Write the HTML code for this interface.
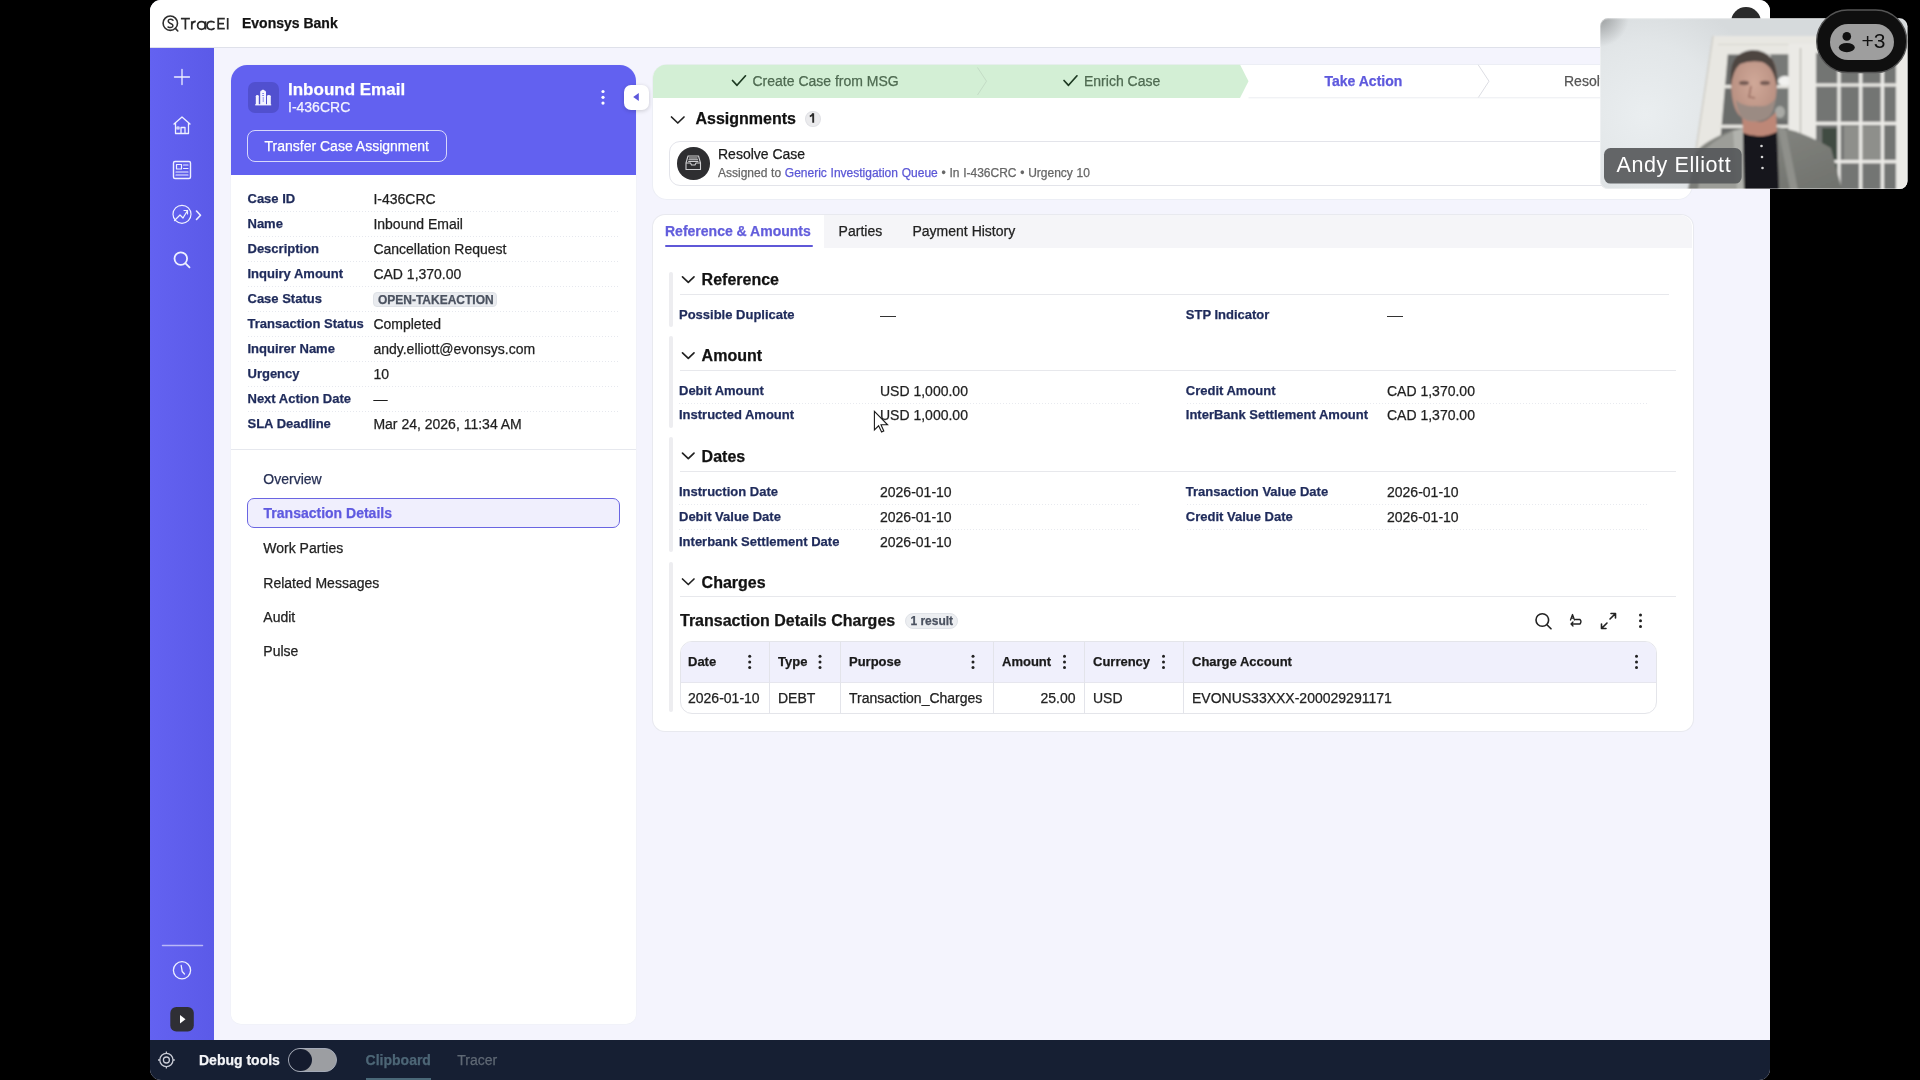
<!DOCTYPE html>
<html><head><meta charset="utf-8">
<style>
*{box-sizing:border-box;margin:0;padding:0}
html,body{width:1920px;height:1080px;overflow:hidden;background:#000;font-family:"Liberation Sans",sans-serif}
#screen{position:absolute;left:150px;top:0;width:1620px;height:1080px;background:#f4f4fd;border-radius:11px;overflow:hidden;will-change:transform}
.a{position:absolute}
.t{position:absolute;white-space:nowrap;line-height:1;-webkit-text-stroke:0.25px currentColor}
svg.a{overflow:visible}
</style></head><body>
<div id="screen">
<div class="a" style="left:0.0px;top:0.0px;width:1620.0px;height:48.0px;background:#fff;border-bottom:1px solid #dfe1ea"></div>
<svg class="a" style="left:0;top:0" width="1620" height="1080" viewBox="150 0 1620 1080">
<g fill="none" stroke="#2e2e2e" stroke-width="1.6" stroke-linecap="round">
<circle cx="170.3" cy="23.2" r="7.2"/>
<path d="M175.4 28.4 L177.8 31"/>
<path d="M173 20.3 Q171.5 18.8 169.6 19.4 Q167.6 20.2 168.5 22 Q169.5 23.3 171.6 24 Q173.6 25 172.5 26.8 Q171 28.2 168 27" stroke-width="1.5"/>
</g>
<g fill="none" stroke="#2a2a2a" stroke-width="1.75" stroke-linecap="butt">
<path d="M180.9 18.6 H189.9 M185.4 18.6 V29.5"/>
<path d="M191.8 21.2 V29.5 M191.8 24.5 Q192.3 21.4 195.8 21.3"/>
<circle cx="201.5" cy="25.4" r="3.9"/><path d="M205.4 21.2 V29.5"/>
<path d="M214.6 22.6 Q213.2 21.3 211.1 21.3 Q207.1 21.5 207 25.4 Q207.1 29.3 211.1 29.5 Q213.2 29.5 214.6 28.2"/>
<path d="M224.8 18.6 H218.2 V28.6 H224.8 M218.2 23.7 H224"/>
<path d="M227.7 18 V29.5"/>
</g>
</svg>
<div class="t" style="left:92.0px;top:16.4px;font-size:14px;font-weight:bold;color:#141414;">Evonsys Bank</div>
<div class="a" style="left:0.0px;top:48.0px;width:64.0px;height:992.0px;background:linear-gradient(90deg,#6362f1,#5b5ae8)"></div>
<svg class="a" style="left:0;top:0" width="1620" height="1080" viewBox="150 0 1620 1080">
<g fill="none" stroke="#eef0ff" stroke-width="1.3" stroke-linecap="round" stroke-linejoin="round">
<path d="M182 69.5 V84.5 M174.5 77 H189.5"/>
<path d="M174 124 L182 117 L190 124 M175.5 123 V133.5 H188.5 V123 M181 133.5 V127.5 H185 V133.5"/>
<rect x="177" y="127" width="2" height="2" stroke-width="1.2"/>
<rect x="173.5" y="161.5" width="17" height="17" rx="1.5" stroke-width="1.4"/>
<rect x="176.5" y="164.5" width="5" height="4.5" stroke-width="1.2"/>
<path d="M183.5 165 H188 M183.5 168.5 H188 M176 172 H188 M176 175 H188" stroke-width="1.2"/>
<circle cx="182" cy="214.3" r="9" stroke-width="1.2"/>
<path d="M174.5 220.5 L180 215 L183 218 L187.5 210.5 M184 210.5 H187.5 V214" stroke-width="1.2"/>
<path d="M196.5 211 L200.5 215.2 L196.5 219.5" stroke-width="1.6"/>
<circle cx="180.8" cy="258.6" r="6.3" stroke-width="1.8"/>
<path d="M185.5 263.3 L189.5 267.3" stroke-width="1.8"/>
<path d="M162.5 945.5 H202.5" stroke="#b9b8f7" stroke-width="1.5"/>
<circle cx="182" cy="970.3" r="8.6" stroke-width="1.3"/>
<path d="M181.2 965.5 L182.2 971.5 L184.5 974" stroke-width="1.3"/>
</g>
<rect x="170.3" y="1007" width="23.5" height="24.5" rx="6" fill="#2f2f35"/>
<path d="M180 1015 L185.5 1019.2 L180 1023.4 Z" fill="#fff"/>
</svg>
<div class="a" style="left:0.0px;top:1040.0px;width:1620.0px;height:40.0px;background:#161f33"></div>
<svg class="a" style="left:6px;top:1050px" width="21" height="21" viewBox="0 0 21 21">
<g fill="none" stroke="#c9ccd6" stroke-width="1.3">
<circle cx="10.4" cy="10" r="6.6"/><circle cx="10.4" cy="10" r="3"/>
<path d="M10.4 1.6 V3.4 M10.4 16.6 V18.4 M2 10 H3.8 M17 10 H18.8"/></g></svg>
<div class="t" style="left:49.0px;top:1052.7px;font-size:14px;font-weight:bold;color:#f4f5f8;">Debug tools</div>
<div class="a" style="left:138.0px;top:1047.8px;width:49.0px;height:24.2px;background:#9c9ea2;border:1.2px solid #a4aab8;border-radius:12px"></div>
<div class="a" style="left:139.2px;top:1049.0px;width:22.6px;height:21.8px;background:#141b2e;border-radius:50%"></div>
<div class="t" style="left:215.6px;top:1052.7px;font-size:14px;font-weight:bold;color:#4d6676;">Clipboard</div>
<div class="a" style="left:215.6px;top:1077.5px;width:65.7px;height:2.5px;background:#4a6878"></div>
<div class="t" style="left:307.3px;top:1052.7px;font-size:14px;font-weight:normal;color:#5f6874;">Tracer</div>
<div class="a" style="left:81.0px;top:65.0px;width:405.0px;height:958.5px;background:#fff;border-radius:16px 16px 10px 10px;box-shadow:0 0 0 0.5px #eef0f6"></div>
<div class="a" style="left:81.0px;top:65.0px;width:405.0px;height:109.5px;background:#6261f0;border-radius:16px 16px 0 0"></div>
<div class="a" style="left:97.5px;top:81.5px;width:31.5px;height:31.5px;background:#5150cf;border-radius:7px"></div>
<svg class="a" style="left:104px;top:88px" width="19" height="19" viewBox="0 0 19 19">
<g fill="#f4f4ff"><path d="M1.8 17 V8.3 Q1.8 7 3.3 7 Q4.8 7 4.8 8.3 V17 Z"/><path d="M6.2 17 V4.2 Q6.2 2.8 7.4 2.6 L9 1.5 L10.6 2.6 Q12 2.8 12 4.2 V17 Z"/><path d="M13 17 V8.3 Q13 7 14.5 7 Q16.8 7 16.8 8.3 V17 Z"/><rect x="1.2" y="16.2" width="16" height="1.2"/></g>
<g fill="#6a6ae8"><rect x="8.2" y="5" width="1.8" height="0.8"/><rect x="8.2" y="7" width="1.8" height="0.8"/><rect x="8.8" y="9" width="0.7" height="5"/></g>
</svg>
<div class="t" style="left:138.0px;top:80.9px;font-size:17px;font-weight:bold;color:#fff;">Inbound Email</div>
<div class="t" style="left:138.0px;top:99.6px;font-size:14px;font-weight:normal;color:#f3f3ff;">I-436CRC</div>
<svg class="a" style="left:449px;top:88px" width="8" height="20" viewBox="0 0 8 20"><g fill="#fff"><circle cx="4" cy="3.5" r="1.6"/><circle cx="4" cy="9.3" r="1.6"/><circle cx="4" cy="15.1" r="1.6"/></g></svg>
<div class="a" style="left:97.0px;top:129.5px;width:200.0px;height:32.5px;border:1px solid rgba(255,255,255,.75);border-radius:8px"></div>
<div class="t" style="left:114.5px;top:139.1px;font-size:14px;font-weight:normal;color:#fff;">Transfer Case Assignment</div>
<div class="a" style="left:474.0px;top:85.0px;width:24.5px;height:24.5px;background:#fff;border-radius:7px;box-shadow:0 1px 4px rgba(0,0,0,.18)"></div>
<svg class="a" style="left:480px;top:91px" width="12" height="12" viewBox="0 0 12 12"><path d="M3.2 6 L8.8 2 V10 Z" fill="#5d58dc"/></svg>
<div class="t" style="left:97.5px;top:192.3px;font-size:13px;font-weight:bold;color:#1f2b5b;">Case ID</div>
<div class="t" style="left:223.4px;top:192.3px;font-size:14px;font-weight:normal;color:#1f1f1f;">I-436CRC</div>
<div class="a" style="left:97.5px;top:210.9px;width:372.5px;height:1.0px;background-image:linear-gradient(90deg,#e6e8ee 50%,transparent 50%);background-size:3px 1px"></div>
<div class="t" style="left:97.5px;top:217.3px;font-size:13px;font-weight:bold;color:#1f2b5b;">Name</div>
<div class="t" style="left:223.4px;top:217.3px;font-size:14px;font-weight:normal;color:#1f1f1f;">Inbound Email</div>
<div class="a" style="left:97.5px;top:235.9px;width:372.5px;height:1.0px;background-image:linear-gradient(90deg,#e6e8ee 50%,transparent 50%);background-size:3px 1px"></div>
<div class="t" style="left:97.5px;top:242.3px;font-size:13px;font-weight:bold;color:#1f2b5b;">Description</div>
<div class="t" style="left:223.4px;top:242.3px;font-size:14px;font-weight:normal;color:#1f1f1f;">Cancellation Request</div>
<div class="a" style="left:97.5px;top:260.9px;width:372.5px;height:1.0px;background-image:linear-gradient(90deg,#e6e8ee 50%,transparent 50%);background-size:3px 1px"></div>
<div class="t" style="left:97.5px;top:267.3px;font-size:13px;font-weight:bold;color:#1f2b5b;">Inquiry Amount</div>
<div class="t" style="left:223.4px;top:267.3px;font-size:14px;font-weight:normal;color:#1f1f1f;">CAD 1,370.00</div>
<div class="a" style="left:97.5px;top:285.9px;width:372.5px;height:1.0px;background-image:linear-gradient(90deg,#e6e8ee 50%,transparent 50%);background-size:3px 1px"></div>
<div class="t" style="left:97.5px;top:292.3px;font-size:13px;font-weight:bold;color:#1f2b5b;">Case Status</div>
<div class="a" style="left:223.3px;top:292.3px;width:123.7px;height:15.2px;background:#e9ebef;border:1px solid #dfe2e7;border-radius:4px"></div>
<div class="t" style="left:227.9px;top:293.7px;font-size:12px;font-weight:bold;color:#4b5260;">OPEN-TAKEACTION</div>
<div class="a" style="left:97.5px;top:310.9px;width:372.5px;height:1.0px;background-image:linear-gradient(90deg,#e6e8ee 50%,transparent 50%);background-size:3px 1px"></div>
<div class="t" style="left:97.5px;top:317.3px;font-size:13px;font-weight:bold;color:#1f2b5b;">Transaction Status</div>
<div class="t" style="left:223.4px;top:317.3px;font-size:14px;font-weight:normal;color:#1f1f1f;">Completed</div>
<div class="a" style="left:97.5px;top:335.9px;width:372.5px;height:1.0px;background-image:linear-gradient(90deg,#e6e8ee 50%,transparent 50%);background-size:3px 1px"></div>
<div class="t" style="left:97.5px;top:342.3px;font-size:13px;font-weight:bold;color:#1f2b5b;">Inquirer Name</div>
<div class="t" style="left:223.4px;top:342.3px;font-size:14px;font-weight:normal;color:#1f1f1f;">andy.elliott@evonsys.com</div>
<div class="a" style="left:97.5px;top:360.9px;width:372.5px;height:1.0px;background-image:linear-gradient(90deg,#e6e8ee 50%,transparent 50%);background-size:3px 1px"></div>
<div class="t" style="left:97.5px;top:367.3px;font-size:13px;font-weight:bold;color:#1f2b5b;">Urgency</div>
<div class="t" style="left:223.4px;top:367.3px;font-size:14px;font-weight:normal;color:#1f1f1f;">10</div>
<div class="a" style="left:97.5px;top:385.9px;width:372.5px;height:1.0px;background-image:linear-gradient(90deg,#e6e8ee 50%,transparent 50%);background-size:3px 1px"></div>
<div class="t" style="left:97.5px;top:392.3px;font-size:13px;font-weight:bold;color:#1f2b5b;">Next Action Date</div>
<div class="t" style="left:223.4px;top:392.3px;font-size:14px;font-weight:normal;color:#1f1f1f;">—</div>
<div class="a" style="left:97.5px;top:410.9px;width:372.5px;height:1.0px;background-image:linear-gradient(90deg,#e6e8ee 50%,transparent 50%);background-size:3px 1px"></div>
<div class="t" style="left:97.5px;top:417.3px;font-size:13px;font-weight:bold;color:#1f2b5b;">SLA Deadline</div>
<div class="t" style="left:223.4px;top:417.3px;font-size:14px;font-weight:normal;color:#1f1f1f;">Mar 24, 2026, 11:34 AM</div>
<div class="a" style="left:81.0px;top:449.0px;width:405.0px;height:1.0px;background:#e6e8ee"></div>
<div class="a" style="left:97.0px;top:497.8px;width:372.5px;height:30.7px;background:#f0effd;border:1.6px solid #6a65e2;border-radius:7px"></div>
<div class="t" style="left:113.3px;top:472.4px;font-size:14px;font-weight:normal;color:#273055;">Overview</div>
<div class="t" style="left:113.6px;top:506.1px;font-size:14px;font-weight:bold;color:#5f5ae0;">Transaction Details</div>
<div class="t" style="left:113.3px;top:540.6px;font-size:14px;font-weight:normal;color:#222;">Work Parties</div>
<div class="t" style="left:113.3px;top:575.8px;font-size:14px;font-weight:normal;color:#222;">Related Messages</div>
<div class="t" style="left:113.3px;top:609.9px;font-size:14px;font-weight:normal;color:#222;">Audit</div>
<div class="t" style="left:113.3px;top:644.1px;font-size:14px;font-weight:normal;color:#222;">Pulse</div>
<div class="a" style="left:503.0px;top:64.5px;width:1039.0px;height:134.0px;background:#fff;border-radius:14px;box-shadow:0 0 0 1px #eceef5"></div>
<svg class="a" style="left:0;top:0" width="1620" height="1080" viewBox="150 0 1620 1080">
<defs><clipPath id="cb"><rect x="653" y="64.5" width="1039" height="134" rx="14"/></clipPath></defs>
<g clip-path="url(#cb)">
<path d="M653 64.5 H1240 L1248.5 81.2 L1240 98 H653 Z" fill="#d3efd5"/>
<path d="M977.5 67.5 L986.5 81.2 L977.5 95" fill="none" stroke="#c4dcc6" stroke-width="1"/>
<path d="M1478 64.5 L1489 81.2 L1478 98" fill="none" stroke="#dcdde3" stroke-width="1"/>
<path d="M1248.5 97.8 H1692" stroke="#ecedf1" stroke-width="1"/>
</g>
<g fill="none" stroke="#1d3a22" stroke-width="1.7" stroke-linecap="round" stroke-linejoin="round">
<path d="M732.5 80.5 L737 85.3 L745.5 75.8"/>
<path d="M1064 80.5 L1068.5 85.3 L1077 75.8"/>
</g>
<path d="M671.5 117 L677.8 123 L684 117" fill="none" stroke="#222" stroke-width="1.7" stroke-linecap="round" stroke-linejoin="round"/>
</svg>
<div class="t" style="left:602.5px;top:73.6px;font-size:14px;font-weight:normal;color:#4e6a51;">Create Case from MSG</div>
<div class="t" style="left:934.0px;top:73.6px;font-size:14px;font-weight:normal;color:#4e6a51;">Enrich Case</div>
<div class="t" style="left:1174.5px;top:73.6px;font-size:14px;font-weight:bold;color:#5e59dd;">Take Action</div>
<div class="t" style="left:1414.0px;top:73.6px;font-size:14px;font-weight:normal;color:#555;">Resolve Case</div>
<div class="t" style="left:545.5px;top:110.5px;font-size:16px;font-weight:bold;color:#111;">Assignments</div>
<div class="a" style="left:655.0px;top:111.1px;width:15.6px;height:16.1px;background:#ebebed;border:1px solid #e0e1e5;border-radius:50%"></div>
<svg class="a" style="left:0;top:0" width="1620" height="1080" viewBox="150 0 1620 1080"><path d="M813.2 113.3 V122.8 M813.2 113.5 Q812 116 809.8 116.4" fill="none" stroke="#2a2a2a" stroke-width="1.9"/></svg>
<div class="a" style="left:518.5px;top:140.5px;width:1023.5px;height:45.5px;border:1px solid #e3e4ea;border-radius:11px;background:#fff"></div>
<div class="a" style="left:527.0px;top:147.0px;width:32.5px;height:32.5px;background:#2e2e31;border-radius:50%"></div>
<svg class="a" style="left:534px;top:154px" width="19" height="18" viewBox="0 0 19 18">
<g fill="none" stroke="#cfcfd2" stroke-width="1.1" stroke-linejoin="round">
<path d="M2 9 L4 2 H14.5 L16.5 9 V15.5 H2 Z"/><path d="M2 9 H6.5 L7.5 11 H11 L12 9 H16.5"/>
<path d="M5 4 H13.5 M4.5 5.8 H14 M4.2 7.5 H14.3"/></g></svg>
<div class="t" style="left:568.0px;top:146.7px;font-size:14px;font-weight:normal;color:#1b1b1b;">Resolve Case</div>
<div class="t" style="left:568.0px;top:167.3px;font-size:12px;font-weight:normal;color:#666;word-spacing:0.4px">Assigned to <span style="color:#5b57d6">Generic Investigation Queue</span> • In I-436CRC • Urgency 10</div>
<div class="a" style="left:503.0px;top:214.5px;width:1039.5px;height:516.5px;background:#fff;border-radius:12px;box-shadow:0 0 0 1px #e8e9ef"></div>
<div class="a" style="left:673.7px;top:214.5px;width:868.8px;height:33.8px;background:#f5f5f8;border-radius:0 12px 0 0"></div>
<div class="t" style="left:515.0px;top:224.0px;font-size:14px;font-weight:bold;color:#625ddc;">Reference &amp; Amounts</div>
<div class="a" style="left:514.6px;top:244.5px;width:148.3px;height:2.7px;background:#5f58d8;border-radius:2px"></div>
<div class="t" style="left:688.6px;top:224.0px;font-size:14px;font-weight:normal;color:#222;">Parties</div>
<div class="t" style="left:762.5px;top:224.0px;font-size:14px;font-weight:normal;color:#222;">Payment History</div>
<div class="t" style="left:551.6px;top:272.3px;font-size:16px;font-weight:bold;color:#111;">Reference</div>
<div class="a" style="left:530.0px;top:294.0px;width:988.5px;height:1.0px;background:#e7e8ec"></div>
<div class="a" style="left:518.5px;top:272.0px;width:4.3px;height:54.5px;background:#ededf0;border-radius:2px"></div>
<div class="t" style="left:551.6px;top:348.4px;font-size:16px;font-weight:bold;color:#111;">Amount</div>
<div class="a" style="left:530.0px;top:369.6px;width:996.0px;height:1.0px;background:#e7e8ec"></div>
<div class="a" style="left:518.5px;top:336.0px;width:4.3px;height:92.0px;background:#ededf0;border-radius:2px"></div>
<div class="t" style="left:551.6px;top:448.7px;font-size:16px;font-weight:bold;color:#111;">Dates</div>
<div class="a" style="left:530.0px;top:470.8px;width:996.0px;height:1.0px;background:#e7e8ec"></div>
<div class="a" style="left:518.5px;top:437.0px;width:4.3px;height:114.7px;background:#ededf0;border-radius:2px"></div>
<div class="t" style="left:551.6px;top:574.5px;font-size:16px;font-weight:bold;color:#111;">Charges</div>
<div class="a" style="left:530.0px;top:596.0px;width:996.0px;height:1.0px;background:#e7e8ec"></div>
<div class="a" style="left:518.5px;top:561.7px;width:4.3px;height:150.3px;background:#ededf0;border-radius:2px"></div>
<svg class="a" style="left:0;top:0" width="1620" height="1080" viewBox="150 0 1620 1080">
<path d="M682.5 276.8 L688.3 282.3 L694 276.8" fill="none" stroke="#222" stroke-width="1.7" stroke-linecap="round" stroke-linejoin="round"/>
<path d="M682.5 352.9 L688.3 358.4 L694 352.9" fill="none" stroke="#222" stroke-width="1.7" stroke-linecap="round" stroke-linejoin="round"/>
<path d="M682.5 453.2 L688.3 458.7 L694 453.2" fill="none" stroke="#222" stroke-width="1.7" stroke-linecap="round" stroke-linejoin="round"/>
<path d="M682.5 579 L688.3 584.5 L694 579" fill="none" stroke="#222" stroke-width="1.7" stroke-linecap="round" stroke-linejoin="round"/>
</svg>
<div class="t" style="left:529.0px;top:307.5px;font-size:13px;font-weight:bold;color:#1f2b5b;">Possible Duplicate</div>
<div class="a" style="left:730.0px;top:315.5px;width:15.5px;height:1.4px;background:#333"></div>
<div class="t" style="left:1035.8px;top:307.5px;font-size:13px;font-weight:bold;color:#1f2b5b;">STP Indicator</div>
<div class="a" style="left:1237.0px;top:315.5px;width:15.5px;height:1.4px;background:#333"></div>
<div class="t" style="left:529.0px;top:383.8px;font-size:13px;font-weight:bold;color:#1f2b5b;">Debit Amount</div>
<div class="t" style="left:730.0px;top:383.5px;font-size:14px;font-weight:normal;color:#1f1f1f;">USD 1,000.00</div>
<div class="t" style="left:1035.8px;top:383.8px;font-size:13px;font-weight:bold;color:#1f2b5b;">Credit Amount</div>
<div class="t" style="left:1237.0px;top:383.5px;font-size:14px;font-weight:normal;color:#1f1f1f;">CAD 1,370.00</div>
<div class="a" style="left:529.0px;top:402.9px;width:461.0px;height:1.0px;background-image:linear-gradient(90deg,#e8eaef 50%,transparent 50%);background-size:3px 1px"></div>
<div class="a" style="left:1037.0px;top:402.9px;width:462.0px;height:1.0px;background-image:linear-gradient(90deg,#e8eaef 50%,transparent 50%);background-size:3px 1px"></div>
<div class="t" style="left:529.0px;top:408.2px;font-size:13px;font-weight:bold;color:#1f2b5b;">Instructed Amount</div>
<div class="t" style="left:730.0px;top:407.9px;font-size:14px;font-weight:normal;color:#1f1f1f;">USD 1,000.00</div>
<div class="t" style="left:1035.8px;top:408.2px;font-size:13px;font-weight:bold;color:#1f2b5b;">InterBank Settlement Amount</div>
<div class="t" style="left:1237.0px;top:407.9px;font-size:14px;font-weight:normal;color:#1f1f1f;">CAD 1,370.00</div>
<div class="t" style="left:529.0px;top:484.8px;font-size:13px;font-weight:bold;color:#1f2b5b;">Instruction Date</div>
<div class="t" style="left:730.0px;top:484.5px;font-size:14px;font-weight:normal;color:#1f1f1f;">2026-01-10</div>
<div class="t" style="left:1035.8px;top:484.8px;font-size:13px;font-weight:bold;color:#1f2b5b;">Transaction Value Date</div>
<div class="t" style="left:1237.0px;top:484.5px;font-size:14px;font-weight:normal;color:#1f1f1f;">2026-01-10</div>
<div class="a" style="left:529.0px;top:503.5px;width:461.0px;height:1.0px;background-image:linear-gradient(90deg,#e8eaef 50%,transparent 50%);background-size:3px 1px"></div>
<div class="a" style="left:1037.0px;top:503.5px;width:462.0px;height:1.0px;background-image:linear-gradient(90deg,#e8eaef 50%,transparent 50%);background-size:3px 1px"></div>
<div class="t" style="left:529.0px;top:510.0px;font-size:13px;font-weight:bold;color:#1f2b5b;">Debit Value Date</div>
<div class="t" style="left:730.0px;top:509.7px;font-size:14px;font-weight:normal;color:#1f1f1f;">2026-01-10</div>
<div class="t" style="left:1035.8px;top:510.0px;font-size:13px;font-weight:bold;color:#1f2b5b;">Credit Value Date</div>
<div class="t" style="left:1237.0px;top:509.7px;font-size:14px;font-weight:normal;color:#1f1f1f;">2026-01-10</div>
<div class="a" style="left:529.0px;top:529.3px;width:461.0px;height:1.0px;background-image:linear-gradient(90deg,#e8eaef 50%,transparent 50%);background-size:3px 1px"></div>
<div class="a" style="left:1037.0px;top:529.3px;width:462.0px;height:1.0px;background-image:linear-gradient(90deg,#e8eaef 50%,transparent 50%);background-size:3px 1px"></div>
<div class="t" style="left:529.0px;top:534.9px;font-size:13px;font-weight:bold;color:#1f2b5b;">Interbank Settlement Date</div>
<div class="t" style="left:730.0px;top:534.6px;font-size:14px;font-weight:normal;color:#1f1f1f;">2026-01-10</div>
<div class="t" style="left:530.0px;top:613.2px;font-size:16px;font-weight:bold;color:#161616;">Transaction Details Charges</div>
<div class="a" style="left:755.0px;top:613.3px;width:52.5px;height:15.7px;background:#eceef1;border:1px solid #e0e3e8;border-radius:8px"></div>
<div class="t" style="left:760.4px;top:614.6px;font-size:12px;font-weight:bold;color:#4b5260;">1 result</div>
<svg class="a" style="left:0;top:0" width="1620" height="1080" viewBox="150 0 1620 1080">
<g fill="none" stroke="#222" stroke-width="1.6" stroke-linecap="round" stroke-linejoin="round">
<circle cx="1542.3" cy="620" r="6.3"/><path d="M1547 624.8 L1551 628.8"/>
<path d="M1601.5 628.5 L1607 623 M1601.5 624 V628.5 H1606 M1615.5 613.5 L1610 619 M1611 613.5 H1615.5 V618"/>
</g>
<g fill="none" stroke="#222" stroke-width="1.3" stroke-linecap="round" stroke-linejoin="round">
<path d="M1570.5 620 L1572.5 614.5 L1574.5 620 M1571.2 618.2 H1573.8"/>
<path d="M1575.5 619.5 H1580 Q1582 621.5 1580 624 H1571 M1573 622 L1571 624 L1573 626"/>
</g>
<g fill="#222"><circle cx="1640.5" cy="615" r="1.5"/><circle cx="1640.5" cy="620.8" r="1.5"/><circle cx="1640.5" cy="626.6" r="1.5"/></g>
</svg>
<div class="a" style="left:529.5px;top:641.3px;width:977.1px;height:72.5px;background:#fff;border:1px solid #e4e5ea;border-radius:12px;overflow:hidden"></div>
<div class="a" style="left:530.5px;top:642.3px;width:975.1px;height:40.3px;background:#f0f0fc;border-radius:11px 11px 0 0"></div>
<div class="a" style="left:530.5px;top:682.4px;width:975.1px;height:1.0px;background:#e6e6ee"></div>
<div class="a" style="left:618.6px;top:642.3px;width:1.0px;height:70.7px;background:#e3e4ea"></div>
<div class="a" style="left:689.6px;top:642.3px;width:1.0px;height:70.7px;background:#e3e4ea"></div>
<div class="a" style="left:842.9px;top:642.3px;width:1.0px;height:70.7px;background:#e3e4ea"></div>
<div class="a" style="left:933.8px;top:642.3px;width:1.0px;height:70.7px;background:#e3e4ea"></div>
<div class="a" style="left:1032.6px;top:642.3px;width:1.0px;height:70.7px;background:#e3e4ea"></div>
<div class="t" style="left:538.0px;top:655.3px;font-size:13px;font-weight:bold;color:#1a1a1a;">Date</div>
<div class="t" style="left:628.0px;top:655.3px;font-size:13px;font-weight:bold;color:#1a1a1a;">Type</div>
<div class="t" style="left:699.0px;top:655.3px;font-size:13px;font-weight:bold;color:#1a1a1a;">Purpose</div>
<div class="t" style="left:852.0px;top:655.3px;font-size:13px;font-weight:bold;color:#1a1a1a;">Amount</div>
<div class="t" style="left:943.0px;top:655.3px;font-size:13px;font-weight:bold;color:#1a1a1a;">Currency</div>
<div class="t" style="left:1042.0px;top:655.3px;font-size:13px;font-weight:bold;color:#1a1a1a;">Charge Account</div>
<svg class="a" style="left:0;top:0" width="1620" height="1080" viewBox="150 0 1620 1080"><g fill="#222"><circle cx="749.7" cy="656.2" r="1.5"/><circle cx="749.7" cy="661.9" r="1.5"/><circle cx="749.7" cy="667.6" r="1.5"/><circle cx="820" cy="656.2" r="1.5"/><circle cx="820" cy="661.9" r="1.5"/><circle cx="820" cy="667.6" r="1.5"/><circle cx="973" cy="656.2" r="1.5"/><circle cx="973" cy="661.9" r="1.5"/><circle cx="973" cy="667.6" r="1.5"/><circle cx="1064.5" cy="656.2" r="1.5"/><circle cx="1064.5" cy="661.9" r="1.5"/><circle cx="1064.5" cy="667.6" r="1.5"/><circle cx="1163.5" cy="656.2" r="1.5"/><circle cx="1163.5" cy="661.9" r="1.5"/><circle cx="1163.5" cy="667.6" r="1.5"/><circle cx="1636.5" cy="656.2" r="1.5"/><circle cx="1636.5" cy="661.9" r="1.5"/><circle cx="1636.5" cy="667.6" r="1.5"/></g></svg>
<div class="t" style="left:538.0px;top:690.8px;font-size:14px;font-weight:normal;color:#222;">2026-01-10</div>
<div class="t" style="left:628.0px;top:690.8px;font-size:14px;font-weight:normal;color:#222;">DEBT</div>
<div class="t" style="left:699.0px;top:690.8px;font-size:14px;font-weight:normal;color:#222;">Transaction_Charges</div>
<div class="t" style="left:925.5px;top:690.8px;font-size:14px;font-weight:normal;color:#222;transform:translateX(-100%)">25.00</div>
<div class="t" style="left:943.0px;top:690.8px;font-size:14px;font-weight:normal;color:#222;">USD</div>
<div class="t" style="left:1042.0px;top:690.8px;font-size:14px;font-weight:normal;color:#222;">EVONUS33XXX-200029291171</div>
<svg class="a" style="left:0;top:0" width="1620" height="1080" viewBox="150 0 1620 1080">
<path d="M874.4 411.3 V430 L878.6 425.8 L881.6 432 L883.8 431 L881 424.8 H887.6 Z" fill="#fff" fill-opacity="0.6" stroke="#1a1a1a" stroke-width="1.1" stroke-linejoin="miter"/></svg>
<div class="a" style="left:1580.5px;top:7.3px;width:30.0px;height:30.0px;background:#2b2b2b;border-radius:50%"></div>
</div>
<svg style="position:absolute;left:1600px;top:18px" width="308" height="172" viewBox="1600 18 308 172">
<defs>
<clipPath id="vc"><rect x="1600" y="18.3" width="307.5" height="170.7" rx="8"/></clipPath>
<radialGradient id="wall" cx="1645" cy="115" r="120" gradientUnits="userSpaceOnUse">
<stop offset="0" stop-color="#eaeef0"/><stop offset="0.6" stop-color="#e2e6e8"/><stop offset="1" stop-color="#d6dadc"/>
</radialGradient>
<radialGradient id="vig" cx="1599" cy="17" r="30" gradientUnits="userSpaceOnUse">
<stop offset="0" stop-color="#000" stop-opacity="0.3"/><stop offset="1" stop-color="#000" stop-opacity="0"/>
</radialGradient>
<linearGradient id="jk" x1="0" y1="0" x2="1" y2="1">
<stop offset="0" stop-color="#8a8b86"/><stop offset="1" stop-color="#6f716c"/>
</linearGradient>
<radialGradient id="face" cx="0.5" cy="0.45" r="0.6">
<stop offset="0" stop-color="#d0a898"/><stop offset="1" stop-color="#b58c7e"/>
</radialGradient>
<filter id="bl" x="-5%" y="-5%" width="110%" height="110%"><feGaussianBlur stdDeviation="0.9"/></filter>
</defs>
<g clip-path="url(#vc)">
<rect x="1600" y="18" width="308" height="172" fill="url(#wall)"/>
<rect x="1600" y="18" width="308" height="172" fill="url(#vig)"/>
<g filter="url(#bl)">
<!-- door frame (slanted left edge) -->
<path d="M1713 36 H1908 V190 H1690 Z" fill="#e8e7e2"/>
<path d="M1713 36 L1690 190" stroke="#cfcdc6" stroke-width="1.5"/>
<path d="M1718 44.5 H1908" stroke="#d6d4ce" stroke-width="1.2"/>
<!-- left door glass -->
<path d="M1727.8 54.5 H1788.5 V190 H1716 Z" fill="#6a6c6a"/>
<path d="M1769 54.5 H1788.5 V120 H1769 Z" fill="#777977"/>
<ellipse cx="1785" cy="81" rx="7" ry="5" fill="#f2f2f0"/>
<path d="M1722 86.6 H1788.5 M1718 126.3 H1788.5 M1769 54.5 V86" stroke="#e6e5e0" stroke-width="3.2"/>
<ellipse cx="1780" cy="112" rx="5" ry="6" fill="#a9aaa6"/>
<!-- central stile -->
<rect x="1788.5" y="44" width="27.5" height="146" fill="#ebeae6"/>
<path d="M1800.5 48 V190" stroke="#b5b4ae" stroke-width="1.2"/>
<!-- right door glass -->
<rect x="1816" y="53" width="92" height="137" fill="#737573"/>
<rect x="1822" y="128" width="18" height="46" fill="#3f4b42"/>
<rect x="1844" y="126" width="36" height="34" fill="#8e8f8b"/>
<path d="M1816 85 H1908 M1816 123.3 H1908 M1816 161.7 H1908" stroke="#edece8" stroke-width="3.2"/>
<path d="M1839 53 V190 M1860.7 53 V190 M1882.4 53 V190" stroke="#edece8" stroke-width="3.2"/><rect x="1896" y="44" width="12" height="146" fill="#ebeae6"/>
<!-- man: jacket -->
<path d="M1688 190 L1696 152 Q1704 141 1733 130 L1745 128 L1776 127 Q1800 130 1831 148 L1842 190 Z" fill="url(#jk)"/>
<path d="M1698 190 L1702 153 Q1712 141 1733 131 L1744 190 Z" fill="#9c9d98"/>
<path d="M1733 131 L1744 128 L1748 190 H1737 Z" fill="#b1b2ad"/>
<path d="M1778 127 L1790 190 H1798 L1786 130 Z" fill="#8f908b"/>
<!-- shirt -->
<path d="M1743 132 Q1760 139 1777 131 L1779 190 H1744 Z" fill="#15131a"/>
<!-- neck -->
<path d="M1742 112 Q1758 132 1776 112 L1777 132 Q1760 140 1743 133 Z" fill="#bd8777"/>
<!-- head -->
<path d="M1731 80 Q1730 52 1754 52 Q1778 52 1777 80 Q1777 104 1770 114 Q1762 122 1754 122 Q1745 122 1738 114 Q1731 104 1731 80 Z" fill="url(#face)"/>
<path d="M1731 86 Q1727 52 1752 50 Q1780 50 1777 88 Q1774 66 1762 62 Q1750 60 1740 64 Q1733 70 1731 86 Z" fill="#4d4541"/>
<path d="M1736 100 Q1738 124 1756 121 Q1774 122 1775 99 Q1768 108 1756 106 Q1743 107 1736 100 Z" fill="#9b8b83"/>
<ellipse cx="1744" cy="83" rx="5" ry="2.2" fill="#5b4540" opacity="0.75"/>
<ellipse cx="1765" cy="83" rx="5" ry="2.2" fill="#5b4540" opacity="0.75"/>
<path d="M1751 86 L1749 97 L1755 98" fill="none" stroke="#9a6e62" stroke-width="1.5"/>
</g>
<g fill="#d8d8d8"><circle cx="1761.5" cy="146" r="1.3"/><circle cx="1762" cy="157" r="1.3"/><circle cx="1762.5" cy="168" r="1.3"/></g>
</g>
<rect x="1600.5" y="18.8" width="306.5" height="169.7" rx="7.5" fill="none" stroke="#fff" stroke-opacity="0.35" stroke-width="1"/>
<!-- name label -->
<rect x="1604" y="148" width="137.7" height="35.6" rx="6.5" fill="#545759" fill-opacity="0.9"/>
<text x="1616.5" y="171.8" font-family="Liberation Sans" font-size="21.5" fill="#fff" letter-spacing="0.6">Andy Elliott</text>
</svg>
<svg style="position:absolute;left:1812px;top:6px" width="100" height="72" viewBox="1812 6 100 72">
<rect x="1816.7" y="10" width="90" height="62.5" rx="31" fill="#0f0f0f" stroke="#555" stroke-width="1.3"/>
<rect x="1830" y="24" width="64" height="36" rx="18" fill="#9e9e9e"/>
<circle cx="1846.8" cy="36.4" r="4.3" fill="#111"/>
<ellipse cx="1846.8" cy="47.6" rx="8" ry="4.6" fill="#111"/>
<text x="1861.5" y="47.6" font-family="Liberation Sans" font-size="21" fill="#111">+3</text>
</svg>
</body></html>
